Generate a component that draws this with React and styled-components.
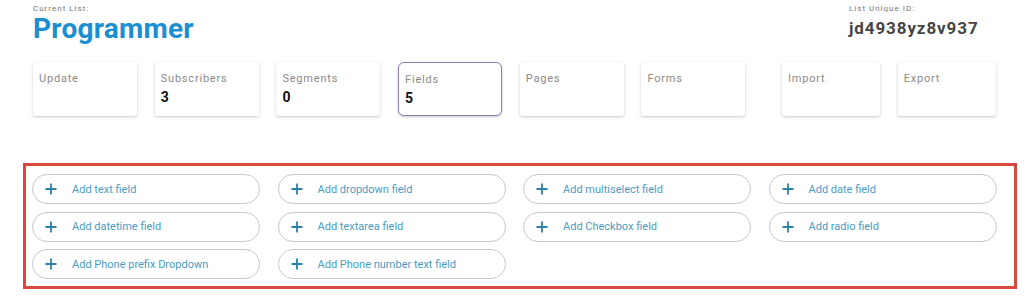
import styled, { createGlobalStyle } from "styled-components";

const GlobalStyle = createGlobalStyle`
    body {
        margin: 0;
        background: #fff;
        font-family: Roboto, "Liberation Sans", sans-serif;
    }
`;

const Page = styled.div`
    width: 1024px;
    height: 300px;
    overflow: hidden;
`;

const Header = styled.div`
    display: flex;
    justify-content: space-between;
    padding: 4px 47px 0 33px;
    height: 52px;
    box-sizing: border-box;
`;

const Caption = styled.div`
    font-size: 8px;
    letter-spacing: 1px;
    color: #777;
    line-height: 10px;
`;

const ListName = styled.div`
    font-size: 28px;
    font-weight: 700;
    color: #1b8fd2;
    letter-spacing: 0.25px;
    line-height: 30px;
`;

const IdBlock = styled.div`
    width: 128px;
`;

const ListId = styled.div`
    margin-top: 4px;
    font-size: 17px;
    font-weight: 700;
    color: #454545;
    letter-spacing: 0.9px;
    line-height: 20px;
`;

const CardRow = styled.div`
    display: flex;
    gap: 18px;
    padding: 10px 0 0 33px;
`;

const CardGroup = styled.div`
    display: flex;
    gap: 17.7px;
    margin-left: ${({ $offset }) => $offset || 0}px;
`;

const Card = styled.div`
    width: ${({ $w }) => $w}px;
    height: 54px;
    box-sizing: border-box;
    padding: 10px 6px 0;
    background: #fff;
    border-radius: ${({ $active }) => ($active ? "6px" : "2px")};
    border: ${({ $active }) => ($active ? "1px solid #8e7fb6" : "none")};
    box-shadow: 0 1px 3px rgba(0, 0, 0, 0.22);
`;

const CardLabel = styled.div`
    font-size: 11px;
    color: #8a8a8a;
    letter-spacing: 0.8px;
    line-height: 14px;
`;

const CardCount = styled.div`
    margin-top: 3px;
    font-size: 14px;
    font-weight: 700;
    color: #111;
    line-height: 16px;
`;

const FieldBox = styled.div`
    margin: 47px 0 0 23px;
    width: 994px;
    height: 126px;
    box-sizing: border-box;
    border: 3px solid #d84a40;
    padding: 8px 0 0 6px;
    display: grid;
    grid-template-columns: repeat(4, 228px);
    grid-auto-rows: 30px;
    column-gap: 17.5px;
    row-gap: 7.5px;
`;

const AddButton = styled.button`
    display: flex;
    align-items: center;
    height: 30px;
    box-sizing: border-box;
    padding: 0 0 0 12px;
    border: 1px solid #c9c9c9;
    border-radius: 15px;
    background: #fff;
    font-family: Roboto, "Liberation Sans", sans-serif;
    font-size: 11px;
    color: #4b9cc3;
    cursor: pointer;
    text-align: left;
`;

const PlusIcon = styled.svg`
    width: 12px;
    height: 12px;
    margin-right: 15px;
    flex-shrink: 0;
`;

const Plus = () => (
    <PlusIcon viewBox="0 0 12 12">
        <path d="M6 0.5v11M0.5 6h11" stroke="#2a82a8" strokeWidth="1.8" fill="none" />
    </PlusIcon>
);

const mainCards = [
    { label: "Update" },
    { label: "Subscribers", count: 3 },
    { label: "Segments", count: 0 },
    { label: "Fields", count: 5, active: true },
    { label: "Pages" },
    { label: "Forms" },
];

const ioCards = [{ label: "Import" }, { label: "Export" }];

const fields = [
    "Add text field",
    "Add dropdown field",
    "Add multiselect field",
    "Add date field",
    "Add datetime field",
    "Add textarea field",
    "Add Checkbox field",
    "Add radio field",
    "Add Phone prefix Dropdown",
    "Add Phone number text field",
];

export default function App() {
    return (
        <Page>
            <GlobalStyle />
            <Header>
                <div>
                    <Caption>Current List:</Caption>
                    <ListName>Programmer</ListName>
                </div>
                <IdBlock>
                    <Caption>List Unique ID:</Caption>
                    <ListId>jd4938yz8v937</ListId>
                </IdBlock>
            </Header>
            <CardRow>
                <CardGroup>
                    {mainCards.map((c) => (
                        <Card key={c.label} $w={104} $active={c.active}>
                            <CardLabel>{c.label}</CardLabel>
                            {c.count !== undefined && <CardCount>{c.count}</CardCount>}
                        </Card>
                    ))}
                </CardGroup>
                <CardGroup $offset={18.5}>
                    {ioCards.map((c) => (
                        <Card key={c.label} $w={98}>
                            <CardLabel>{c.label}</CardLabel>
                        </Card>
                    ))}
                </CardGroup>
            </CardRow>
            <FieldBox>
                {fields.map((f) => (
                    <AddButton key={f}>
                        <Plus />
                        {f}
                    </AddButton>
                ))}
            </FieldBox>
        </Page>
    );
}
